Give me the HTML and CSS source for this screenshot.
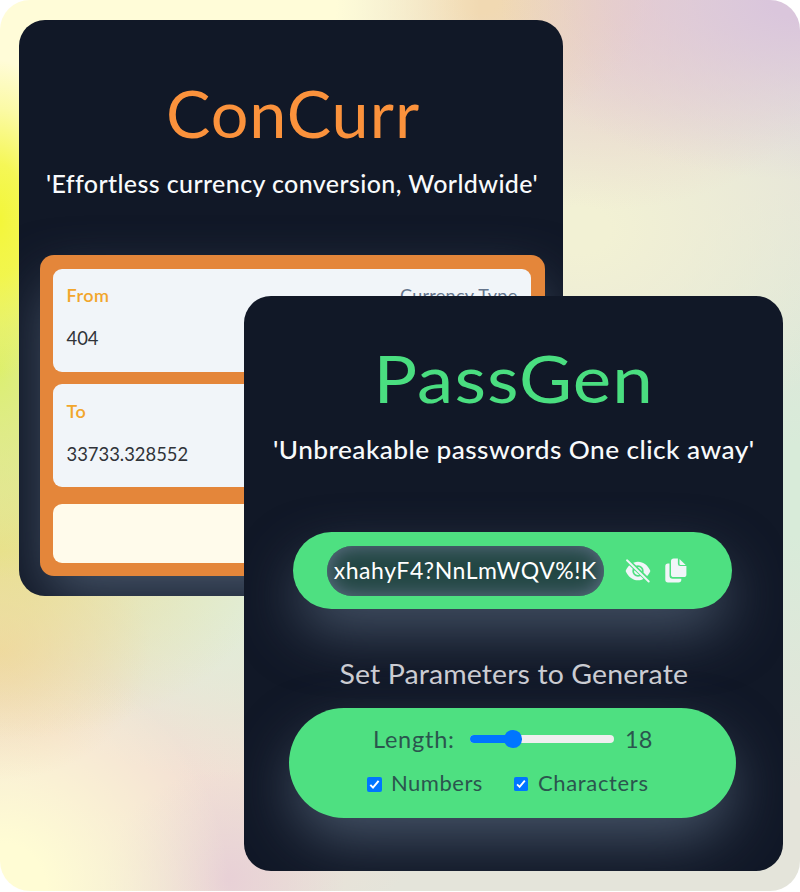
FILE: index.html
```html
<!DOCTYPE html>
<html lang="en">
<head>
<meta charset="utf-8">
<title>ConCurr and PassGen</title>
<link rel="stylesheet" href="styles.css">
</head>
<body>
<main class="stage">
  <section class="card concurr">
    <h1 class="title title-orange">ConCurr</h1>
    <p class="tagline">'Effortless currency conversion, Worldwide'</p>
    <div class="converter">
      <div class="field">
        <div class="field-head"><span class="label">From</span><span class="type">Currency Type</span></div>
        <div class="amount">404</div>
      </div>
      <div class="field">
        <div class="field-head"><span class="label label-to">To</span></div>
        <div class="amount">33733.328552</div>
      </div>
      <div class="swap"></div>
    </div>
  </section>

  <section class="card passgen">
    <h1 class="title title-green">PassGen</h1>
    <p class="tagline tagline-pass">'Unbreakable passwords One click away'</p>
    <div class="output">
      <div class="password"><span>xhahyF4?NnLmWQV%!K</span></div>
      <svg class="eye" viewBox="0 0 26 24">
        <path fill="#f1f5f9" fill-rule="evenodd" d="M.6 12C3 6.300 7.600 2.700 13 2.700S23 6.300 25.400 12C23 17.700 18.400 21.300 13 21.300S3 17.700 .6 12ZM13 6.300a5.700 5.700 0 1 0 0 11.400a5.700 5.700 0 0 0 0-11.400Z"/>
        <path fill="#f1f5f9" d="M13 8c.3 1.900-.8 3.500-4 3.500a4 4 0 1 0 4-3.500Z"/>
        <path stroke="#4ee081" stroke-width="4.600" d="M2 1l22.500 21.500"/>
        <path stroke="#f1f5f9" stroke-width="1.900" stroke-linecap="round" d="M2 1.300l21.700 21.200"/>
      </svg>
      <svg class="copy" viewBox="0 0 22 25">
        <path fill="#f1f5f9" d="M3 5.500h1.500v12a3.300 3.300 0 0 0 3.300 3.300h8.500v1a2.700 2.700 0 0 1-2.700 2.700H3A2.700 2.700 0 0 1 .3 21.800V8.200A2.700 2.700 0 0 1 3 5.500Z"/>
        <path fill="#f1f5f9" d="M8.700.4h4.200v5.300a2.300 2.300 0 0 0 2.300 2.300h6.200v8.400a2.700 2.700 0 0 1-2.700 2.700H8.700A2.700 2.700 0 0 1 6 16.400V3.100A2.700 2.700 0 0 1 8.700.4Z"/>
        <path fill="#f1f5f9" d="M14.500.9l6.200 6h-5a1.200 1.200 0 0 1-1.200-1.200Z"/>
      </svg>
    </div>
    <h2 class="subtitle">Set Parameters to Generate</h2>
    <div class="params">
      <div class="row length-row">
        <span class="length-label">Length:</span>
        <span class="slider"><span class="slider-fill"></span><span class="thumb"></span></span>
        <span class="length-value">18</span>
      </div>
      <div class="row checks">
        <svg class="box" viewBox="0 0 15 15"><rect width="15" height="15" rx="2" fill="#0075ff"/><path d="M3.300 7.900l2.700 2.700L11.600 3.900" fill="none" stroke="#fff" stroke-width="2"/></svg>
        <span class="check-label numbers">Numbers</span>
        <svg class="box box-second" viewBox="0 0 15 15"><rect width="15" height="15" rx="2" fill="#0075ff"/><path d="M3.300 7.900l2.700 2.700L11.600 3.900" fill="none" stroke="#fff" stroke-width="2"/></svg>
        <span class="check-label characters">Characters</span>
      </div>
    </div>
  </section>
</main>
</body>
</html>
```
FILE: styles.css
```css
* { box-sizing: border-box; margin: 0; padding: 0; }
body { background: #fff; font-family: Lato, "Noto Sans", sans-serif; }
.stage {
  position: relative;
  width: 800px;
  height: 891px;
  padding: 20px 0 0 18.5px;
  border-radius: 30px;
  overflow: hidden;
  background:
    radial-gradient(ellipse 70px 160px at 0 220px, #f3f63a 0%, #f3f63ad0 35%, #f3f63a50 70%, #f3f63a00 100%),
    radial-gradient(ellipse 110px 210px at 0 370px, #dcef70 0%, #dcef7090 45%, #dcef7000 100%),
    radial-gradient(ellipse 280px 190px at 0 550px, #eadf90 0%, #eadf9080 45%, #eadf9000 100%),
    radial-gradient(ellipse 150px 130px at 0 650px, #f2d6aa 0%, #f2d6aa70 50%, #f2d6aa00 100%),
    radial-gradient(ellipse 230px 240px at 0 891px, #fffcd4 20%, #fffcd480 60%, #fffcd400 100%),
    radial-gradient(ellipse 120px 110px at 225px 880px, #e8d0d6 0%, #e8d0d680 50%, #e8d0d600 100%),
    radial-gradient(ellipse 300px 210px at 240px 570px, #e1edd8 20%, #e1edd890 60%, #e1edd800 100%),
    radial-gradient(ellipse 340px 240px at 110px 760px, #f3dfd4 20%, #f3dfd490 60%, #f3dfd400 100%),
    radial-gradient(ellipse 480px 380px at 0 0, #fffcd8 70%, #fffcd800 100%),
    radial-gradient(ellipse 300px 180px at 800px 0, #dac6dc 10%, #dac6dc80 50%, #dac6dc00 100%),
    radial-gradient(ellipse 170px 130px at 480px 0, #f1d9b2 10%, #f1d9b200 100%),
    radial-gradient(ellipse 250px 210px at 610px 0, #ebd0ca 10%, #ebd0ca90 50%, #ebd0ca00 100%),
    radial-gradient(ellipse 300px 230px at 580px 230px, #f2f1d4 10%, #f2f1d490 50%, #f2f1d400 100%),
    radial-gradient(ellipse 240px 300px at 800px 490px, #d8ebd9 15%, #d8ebd980 55%, #d8ebd900 100%),
    #e4e4da;
}
.card { background: #111827; overflow: hidden; }
.concurr { width: 544px; height: 576px; border-radius: 26px; padding: 51px 18px 0 21px; }
.passgen {
  position: absolute;
  left: 243.5px;
  top: 296px;
  width: 539.5px;
  height: 575px;
  border-radius: 27px;
  padding-top: 40px;
}
.title { font-size: 66.500px; line-height: 82px; font-weight: 400; text-align: center; white-space: nowrap; }
.title-orange { color: #fb923c; letter-spacing: 1px; padding-left: 2px; }
.title-green { color: #4ade80; letter-spacing: 1px; transform: scaleX(1.095); }
.tagline {
  margin-top: 15px;
  color: #f8fafc;
  font-size: 25px;
  line-height: 30px;
  font-weight: 500;
  letter-spacing: .4px;
  text-align: center;
  white-space: nowrap;
}
.tagline-pass { margin-top: 16px; transform: scaleX(1.05); }
.converter {
  margin-top: 57px;
  height: 321px;
  padding: 13.5px;
  border-radius: 14px;
  background: #e4863a;
  box-shadow: 0 25px 58px -5px #475569;
}
.field { height: 103px; margin-bottom: 12.500px; padding: 15.5px 13.5px; border-radius: 9px; background: #f1f5f9; }
.field-head { display: flex; justify-content: space-between; font-size: 18px; line-height: 22px; }
.label { color: #f2a62c; font-weight: 600; letter-spacing: .5px; }
.type { color: #64748b; letter-spacing: .3px; }
.amount { margin-top: 21px; color: #303338; font-size: 18.400px; line-height: 22px; }
.swap { height: 58.5px; margin-top: 17px; border-radius: 9px; background: #fffbeb; }
.output {
  display: flex;
  align-items: center;
  width: 439.5px;
  height: 77px;
  margin: 68px 0 0 49px;
  padding-left: 34px;
  border-radius: 39px;
  background: #4ee081;
  box-shadow: 0 25px 58px -5px #475569;
}
.password {
  width: 277.5px;
  height: 50px;
  border-radius: 25px;
  background: #234744;
  box-shadow: inset 0 0 20px #64748b;
  color: #fff;
  font-size: 23px;
  letter-spacing: .55px;
  line-height: 49px;
  text-align: center;
  white-space: nowrap;
}
.eye { width: 26px; height: 24px; margin-left: 20.500px; }
.copy { width: 22px; height: 25px; margin-left: 14px; }
.subtitle { margin-top: 49px; color: #cbccd2; font-size: 27px; line-height: 32px; font-weight: 400; letter-spacing: .1px; text-align: center; white-space: nowrap; transform: scaleX(1.055); }
.params {
  width: 446.5px;
  height: 110px;
  margin: 18px 0 0 45.5px;
  padding-top: 17px;
  border-radius: 55px;
  background: #4ee081;
  box-shadow: 0 25px 58px -5px #475569;
  color: #2b554e;
}
.row { display: flex; align-items: center; white-space: nowrap; }
.length-row { height: 28px; padding-left: 84px; font-size: 23.500px; line-height: 28px; }
.length-label { width: 97px; letter-spacing: .75px; }
.slider { position: relative; width: 144px; height: 8.500px; border-radius: 5px; background: #efefef; }
.slider-fill { display: block; width: 43px; height: 100%; border-radius: 5px; background: #0075ff; }
.thumb { position: absolute; left: 34px; top: -4.500px; width: 17.500px; height: 17.500px; border-radius: 50%; background: #0075ff; }
.length-value { margin-left: 11px; }
.checks { height: 26px; margin-top: 17px; padding-left: 78px; font-size: 22px; line-height: 26px; }
.box { width: 15px; height: 15px; margin-top: 2px; }
.numbers { width: 123px; padding-left: 9px; letter-spacing: .5px; }
.box-second { width: 14px; height: 14px; margin-left: 9px; }
.characters { padding-left: 10px; letter-spacing: .65px; }
```
